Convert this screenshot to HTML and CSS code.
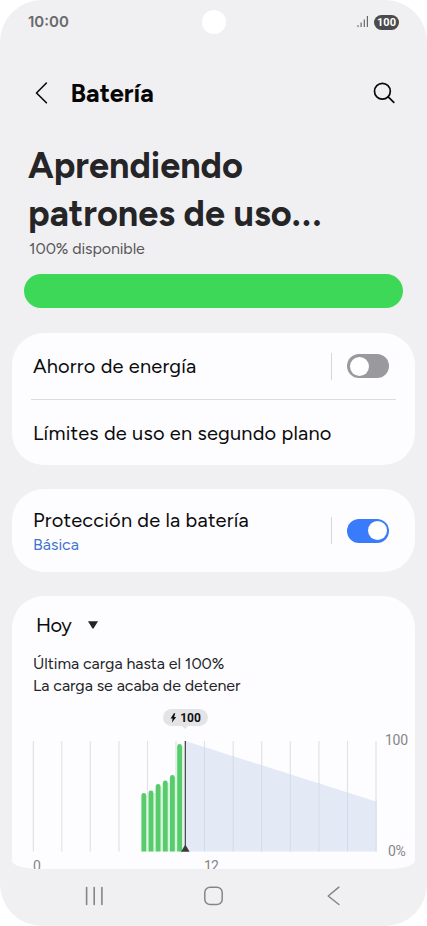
FILE: index.html
```html
<!DOCTYPE html>
<html lang="es">
<head>
<meta charset="utf-8">
<title>Batería</title>
<link rel="stylesheet" href="styles.css">
</head>
<body>
<div class="phone">
  <header class="status">
    <span class="clock">10:00</span>
    <span class="camera"></span>
    <span class="indicators">
      <svg width="12" height="12" viewBox="0 0 12 12"><path d="M1 9.200V11M4.100 6.400V11M7.300 3.400V11M10.400 0V11" stroke="#68686a" stroke-width="1.200" fill="none"/></svg>
      <span class="level">100</span>
    </span>
  </header>
  <nav class="appbar">
    <svg class="back" width="14" height="24" viewBox="0 0 14 24"><path d="M12.400 2L2.500 12l9.900 9.800" fill="none" stroke="#090909" stroke-width="1.600" stroke-linecap="round" stroke-linejoin="round"/></svg>
    <h1>Batería</h1>
    <svg class="search" width="24" height="24" viewBox="0 0 24 24"><g fill="none" stroke="#090909" stroke-width="1.700" stroke-linecap="round"><circle cx="10.400" cy="10.200" r="7.900"/><path d="M16.200 15.900l5.600 5.500"/></g></svg>
  </nav>
  <section class="summary">
    <h2>Aprendiendo<br>patrones de uso<span class="dots">...</span></h2>
    <p>100% disponible</p>
    <div class="battery"></div>
  </section>
  <section class="card options">
    <div class="row first"><span class="label">Ahorro de energía</span><i class="sep"></i><span class="switch"></span></div>
    <div class="row"><span class="label">Límites de uso en segundo plano</span></div>
  </section>
  <section class="card row protect">
    <div class="text"><span class="label">Protección de la batería</span><span class="sub">Básica</span></div>
    <i class="sep"></i><span class="switch on"></span>
  </section>
  <section class="card usage">
    <div class="day"><span class="label">Hoy</span><svg width="12" height="8" viewBox="0 0 12 8"><path d="M1 .3h10L6.700 7.300q-.7.7-1.400 0z" fill="#252528"/></svg></div>
    <p class="info">Última carga hasta el 100%<br>La carga se acaba de detener</p>
    <div class="tip"><svg width="7" height="10" viewBox="0 0 7 10"><path d="M3.900.2L.6 5.400h2L1.900 9.800l4.300-5.700H4.100L5.300.2z" fill="#111"/></svg><span>100</span></div>
    <div class="plot">
      <svg width="346" height="113" viewBox="31 740 346 113">
        <path d="M33.300 741v110.500M61.800 741v110.500M90.300 741v110.500M119 741v110.500M147.500 741v110.500M176 741v110.500M204.500 741v110.500M233.200 741v110.500M261.700 741v110.500M290.300 741v110.500M318.900 741v110.500M347.500 741v110.500M376 741v110.500" stroke="#e3e3e6" stroke-width="1.200"/>
        <path d="M185.500 741L376 801.500v50H185.500z" fill="#e3eaf5"/>
        <path d="M204.500 747v104.500M233.200 756v95.500M261.700 765v86.500M290.300 774v77.500M318.900 783v68.500M347.500 792v59.500M376 801v50.500" stroke="#d3dce8" stroke-width="1"/>
        <path d="M143 851.500V795h5.500v-2h7v-6.500h7V783h7v-5.500h7V746h7.300v105.500z" fill="#d8f6de"/>
        <path d="M141.400 851.500V795.300a2.400 2.400 0 0 1 4.800 0V851.500zM148.600 851.500V793a2.400 2.400 0 0 1 4.800 0V851.500zM155.700 851.500V786.300a2.400 2.400 0 0 1 4.800 0V851.500zM162.900 851.500V783a2.400 2.400 0 0 1 4.800 0V851.500zM170 851.500V777.400a2.400 2.400 0 0 1 4.800 0V851.500zM177.200 851.500V746.400a2.400 2.400 0 0 1 4.800 0V851.500z" fill="#58cc6c"/>
        <path d="M185.300 741v105" stroke="#3b3b3e" stroke-width="1.200"/>
        <path d="M181 851.700l3.700-6.100q.6-.8 1.200 0l3.700 6.100z" fill="#3b3b3e"/>
      </svg>
      <div class="scale"><span>100</span><span class="zero">0%</span></div>
    </div>
    <div class="hours"><span>0</span><span class="noon">12</span></div>
  </section>
  <footer>
    <svg width="20" height="20" viewBox="0 0 20 20"><path d="M1.600 1.500v17M9.200 1.500v17M16.900 1.500v17" stroke="#858588" stroke-width="1.600" stroke-linecap="round"/></svg>
    <svg width="20" height="20" viewBox="0 0 20 20"><rect x=".8" y="1.200" width="17.400" height="17.400" rx="5.300" fill="none" stroke="#858588" stroke-width="1.500"/></svg>
    <svg width="20" height="20" viewBox="0 0 20 20"><path d="M15.900 1.200L5.200 10l10.700 8.500" fill="none" stroke="#858588" stroke-width="1.500" stroke-linecap="round" stroke-linejoin="round"/></svg>
  </footer>
</div>
</body>
</html>
```
FILE: styles.css
```css
* { box-sizing: border-box; }
body { margin: 0; background: #fff; font-family: Figtree, Roboto, sans-serif; }
h1, h2, p { margin: 0; }
svg { display: block; flex: none; }
.phone { width: 427px; height: 926px; background: #f0f0f2; border-radius: 42px; overflow: hidden; display: flex; flex-direction: column; }
.status { height: 44px; flex: none; display: grid; grid-template-columns: 1fr 24px 1fr; align-items: center; padding: 0 28px; }
.clock { font: 600 15px/20px Inter, sans-serif; color: #69696b; white-space: nowrap; }
.camera { width: 24px; height: 24px; border-radius: 50%; background: #fff; }
.indicators { display: flex; justify-content: flex-end; align-items: center; gap: 5px; }
.level { width: 25px; height: 15px; border-radius: 8px; background: #4b4b4d; color: #fff; font: 700 11px/15px Roboto, sans-serif; text-align: center; }
.appbar { height: 98px; flex: none; display: flex; align-items: center; padding: 0 31px 0 34px; }
.appbar h1 { font-size: 25.500px; font-weight: 700; line-height: 32px; margin-left: 22.500px; color: #060606; flex: 1; }
.summary { padding: 0 24px; height: 191px; flex: none; }
.summary h2 { font-size: 36px; font-weight: 700; line-height: 48px; color: #252528; padding-left: 4px; white-space: nowrap; }
.dots { letter-spacing: 1.500px; }
.summary p { font-size: 16px; line-height: 20px; color: #58585a; padding-left: 5px; letter-spacing: -.1px; padding-top: 1px; }
.battery { height: 34px; border-radius: 17px; background: #3dd857; margin-top: 15px; }
.card { width: 403px; margin-left: 12px; background: #fdfdff; border-radius: 32px; flex: none; }
.row { display: flex; align-items: center; padding: 0 26px 0 21px; }
.label { font-size: 20px; line-height: 26px; color: #0b0b0d; flex: 1; white-space: nowrap; letter-spacing: .19px; }
.options { height: 132px; }
.options .row { height: 66px; margin: 0 19px; padding: 0 7px 0 2px; }
.options .first { height: 67px; border-bottom: 1px solid #dddddf; }
.sep { width: 1px; height: 27px; background: #d6d6d9; margin-right: 15px; }
.switch { width: 42px; height: 24px; border-radius: 12px; background: #99999e; padding: 2.500px; }
.switch::before { content: ""; display: block; width: 19px; height: 19px; border-radius: 50%; background: #fff; }
.switch.on { background: #397bfb; }
.switch.on::before { margin-left: auto; }
.protect { height: 83px; margin-top: 24px; }
.text { flex: 1; display: flex; flex-direction: column; }
.sub { font-size: 16px; line-height: 22px; color: #4275cf; padding-top: 1px; margin-bottom: -1px; }
.usage { height: 273px; margin-top: 24px; border-radius: 32px 32px 30px 30px / 32px 32px 8px 8px; overflow: hidden; display: flex; flex-direction: column; }
.day { display: flex; align-items: center; gap: 16px; padding: 15px 0 0 24px; height: 42px; flex: none; }
.day .label { flex: none; letter-spacing: -.5px; }
.info { font-size: 16px; line-height: 22px; color: #252528; margin: 15px 0 0 21px; white-space: nowrap; letter-spacing: -.05px; }
.tip { width: 45px; height: 17px; border-radius: 9px; background: #e4e4e6; margin: 12px 0 0 151px; display: flex; align-items: center; justify-content: center; gap: 3px; position: relative; flex: none; font: 700 12px/17px Roboto, sans-serif; color: #111; }
.tip span { padding-top: 1px; }
.tip::after { content: ""; position: absolute; left: 19px; top: 17px; border: 3.500px solid transparent; border-top-color: #e4e4e6; border-bottom: 0; }
.plot { display: flex; margin: 14px 0 0 19px; height: 113px; flex: none; }
.scale { flex: 1; display: flex; flex-direction: column; justify-content: space-between; margin: -9px 0 -7px; padding-left: 8px; font: 14px/18px Roboto, sans-serif; color: #858588; }
.scale .zero { padding-left: 3px; letter-spacing: -.4px; }
.scale span:first-child { letter-spacing: -.3px; }
.hours { display: flex; padding: 4px 0 0 21px; font: 14px/18px Roboto, sans-serif; color: #858588; }
.noon { margin-left: 163px; letter-spacing: -.7px; }
footer { flex: 1; display: flex; justify-content: space-between; padding: 17px 84px 0 85px; }
```
